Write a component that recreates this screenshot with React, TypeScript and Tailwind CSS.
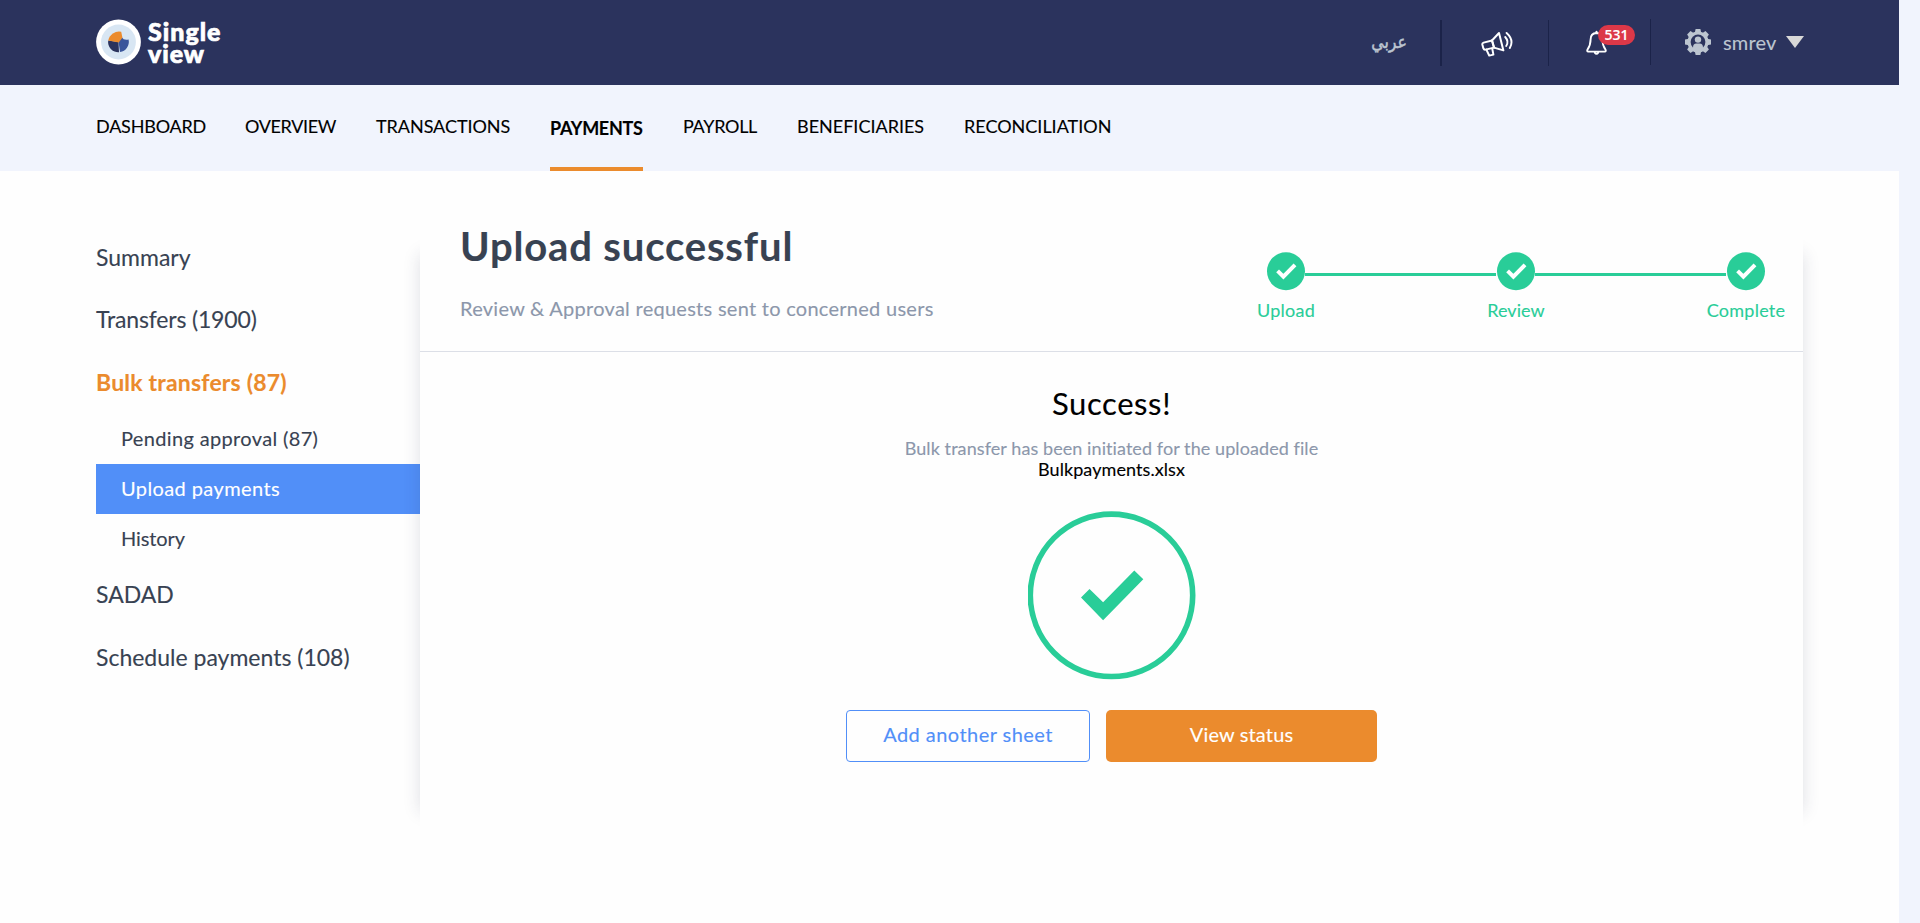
import React from "react";

type NavItem = { label: string; box: string; active?: boolean };

const NAV: NavItem[] = [
  { label: "DASHBOARD", box: "w-[109px] tracking-[-0.2px]" },
  { label: "OVERVIEW", box: "w-[91px] tracking-[-0.35px]" },
  { label: "TRANSACTIONS", box: "w-[134px] tracking-[-0.05px]" },
  { label: "PAYMENTS", box: "w-[93px] tracking-[-0.3px]", active: true },
  { label: "PAYROLL", box: "w-[74px] tracking-[-0.3px]" },
  { label: "BENEFICIARIES", box: "w-[127px] tracking-[0px]" },
  { label: "RECONCILIATION", box: "w-[148px] tracking-[0px]" },
];

function Logo() {
  return (
    <div className="flex items-center">
      <svg width="46" height="46" viewBox="0 0 46 46" className="block">
        <circle cx="23.5" cy="23" r="22.4" fill="#fff" />
        <circle cx="23.5" cy="23" r="17.4" fill="#d8e6f3" />
        <path d="M23.5 23 L13.2 21.5 A10.2 10.2 0 0 0 24 33.2 Z" fill="#2b335d" />
        <path d="M23.5 22.6 L25 33 A10.4 10.4 0 0 0 33.6 20.6 Q28.5 21.6 27 18.6 Z" fill="#3a559b" />
        <path d="M23.8 23.4 L13.2 21.4 A11 11 0 0 1 26.2 12.8 L27.4 18.6 Z" fill="#eb8b2d" />
      </svg>
      <div className="ml-[7px] text-[25px] leading-[22px] font-black text-white [-webkit-text-stroke:0.7px_white] [paint-order:stroke] [stroke-linejoin:round]">
        <span className="tracking-[1px]">Single</span>
        <br />
        <span className="tracking-[0.9px]">view</span>
      </div>
    </div>
  );
}

function Megaphone() {
  return (
    <svg width="32" height="26" viewBox="0 0 32 26" fill="none" stroke="#fff" strokeWidth="2" strokeLinejoin="round" strokeLinecap="round">
      <path d="M11 9.5 L2.6 11.6 Q1 12.2 1.4 13.8 L2.4 17.4 Q3 19 4.6 18.6 L13 16.6" />
      <path d="M11 9.5 L18 2 L22.4 19.4 L13 16.6 Z" />
      <path d="M11 9.5 L13 16.6" />
      <path d="M5.4 18.6 L8.2 24.6 L12.4 23.6 L11.2 17.4" />
      <path d="M24.2 6 Q28.2 10.5 25.2 15" strokeWidth="1.9" />
      <path d="M25.6 2 Q33.4 9 28.8 17" strokeWidth="1.9" />
    </svg>
  );
}

function Bell() {
  return (
    <svg width="21" height="26" viewBox="0 0 21 26" fill="none" stroke="#fff" strokeWidth="1.9" strokeLinejoin="round" strokeLinecap="round">
      <path d="M10.5 4 C6.4 4.2 4.6 7 4.6 10.4 C4.6 15.6 3 18.4 1.4 20.8 Q0.8 22.4 2.2 22.6 H18.8 Q20.2 22.4 19.6 20.8 C18 18.4 16.4 15.6 16.4 10.4 C16.4 7 14.6 4.2 10.5 4 Z" />
      <path d="M10.5 2.6 V4" />
      <path d="M8.8 23.6 Q10.5 26 12.2 23.6" />
    </svg>
  );
}

function Gear() {
  const teeth = [0, 45, 90, 135, 180, 225, 270, 315];
  return (
    <svg width="26" height="28" viewBox="-13 -14 26 28" fill="#bcc5d0">
      {teeth.map((a) => (
        <path key={a} d="M-3.2 -9 L-2.4 -13 H2.4 L3.2 -9 Z" transform={`rotate(${a})`} />
      ))}
      <circle r="10.6" />
      <circle r="7.4" fill="#2b335d" />
      <circle cy="-2.4" r="3.2" />
      <path d="M-5 9 V5.4 Q-5 1.6 -1.6 1.6 H1.6 Q5 1.6 5 5.4 V9 Z" />
    </svg>
  );
}

function Step({ label, className }: { label: string; className: string }) {
  return (
    <div className="flex w-[38px] flex-col items-center">
      <svg width="38" height="39" viewBox="0 0 38 39" className="block">
        <circle cx="19" cy="19.3" r="19" fill="#29cd98" />
        <path d="M10.6 18.8 L16.4 24.6 L28 12.8" fill="none" stroke="#fff" strokeWidth="4" />
      </svg>
      <div className={`mt-[7px] text-[18px] leading-[24px] whitespace-nowrap text-[#29cd98] ${className}`}>{label}</div>
    </div>
  );
}

export default function App() {
  return (
    <div className="flex h-[923px] w-[1920px] overflow-hidden bg-[#f1f4fd] font-['Lato','Liberation_Sans',sans-serif] [-webkit-text-stroke:0.12px]">
      <div className="flex w-[1899px] flex-col">
        <header className="flex h-[85px] items-start justify-between bg-[#2b335d] pr-[95px] pl-[95px]">
          <div className="pt-[19px]">
            <Logo />
          </div>
          <div className="flex items-start">
            <div
              dir="rtl"
              className="mt-[26px] mr-[33px] w-[36px] origin-right scale-x-[0.88] text-[18px] leading-[32px] whitespace-nowrap text-[#bcc5d0] font-['DejaVu_Sans',sans-serif] [-webkit-text-stroke:0.5px]"
            >
              عربي
            </div>
            <div className="mt-[20px] h-[46px] w-[2px] bg-[#1b2349]" />
            <div className="mt-[31px] ml-[39px]">
              <Megaphone />
            </div>
            <div className="mt-[20px] ml-[35px] h-[46px] w-px bg-[#1b2349]" />
            <div className="relative mt-[29px] ml-[37px]">
              <Bell />
              <div className="absolute top-[-4px] left-[12px] flex h-[20px] w-[37px] items-center justify-center rounded-full bg-[#dc3848] text-[14px] leading-none font-semibold text-white font-['Open_Sans',sans-serif]">
                531
              </div>
            </div>
            <div className="mt-[19px] ml-[43px] h-[46px] w-px bg-[#1b2349]" />
            <div className="mt-[28px] ml-[34px]">
              <Gear />
            </div>
            <div className="mt-[29px] ml-[12px] w-[54px] text-[20px] leading-[26px] tracking-[0.2px] text-[#bcc5d0]">smrev</div>
            <svg width="18" height="12" viewBox="0 0 18 12" className="mt-[36px] ml-[9px] block">
              <path d="M0 0 H18 L9 12 Z" fill="#d8d8d8" />
            </svg>
          </div>
        </header>

        <nav className="flex h-[86px] shrink-0 gap-[40px] bg-[#f1f4fd] pl-[96px] text-[18px] leading-[24px] whitespace-nowrap text-black">
          {NAV.map((n) => (
            <div
              key={n.label}
              className={`h-[86px] ${n.box} ${n.active ? "border-b-4 border-[#eb8b2d] pt-[31px] font-bold" : "pt-[29px]"}`}
            >
              {n.label}
            </div>
          ))}
        </nav>

        <div className="flex flex-1 bg-[#fefefe] pl-[96px]">
          <aside className="flex w-[324px] flex-col pt-[55px] text-[23px] whitespace-nowrap text-[#384252]">
            <div className="flex h-[62px] items-center">Summary</div>
            <div className="flex h-[63px] items-center tracking-[-0.15px]">Transfers (1900)</div>
            <div className="flex h-[63px] items-center font-bold tracking-[0.2px] text-[#eb8b2d]">Bulk transfers (87)</div>
            <div className="flex h-[50px] items-center pb-[2px] pl-[25px] text-[20px] tracking-[0.35px]">Pending approval (87)</div>
            <div className="flex h-[50px] items-center bg-[#518ff8] pb-[2px] pl-[25px] text-[20px] tracking-[0.4px] text-white">Upload payments</div>
            <div className="flex h-[50px] items-center pb-[2px] pl-[25px] text-[20px] tracking-[-0.1px]">History</div>
            <div className="flex h-[61px] items-center">SADAD</div>
            <div className="flex h-[65px] items-center">Schedule payments (108)</div>
          </aside>

          <div className="relative isolate h-[657px] w-[1383px]">
            <div className="absolute inset-x-0 top-[83px] bottom-[16px] -z-10 shadow-[0_0_16px_rgba(40,44,80,0.15)]" />
            <main className="flex h-[657px] flex-col bg-[#fefefe]">
              <div className="flex h-[181px] shrink-0 justify-between border-b border-[#dcdfe7] pr-[38px] pl-[40px]">
                <div className="whitespace-nowrap">
                  <h1 className="mt-[51px] text-[40px] leading-[48px] font-bold tracking-[0.85px] text-[#384252]">Upload successful</h1>
                  <p className="mt-[25px] text-[20px] leading-[26px] tracking-[0.27px] text-[#8c97ab]">
                    Review &amp; Approval requests sent to concerned users
                  </p>
                </div>
                <div className="flex items-start pt-[81px]">
                  <Step label="Upload" className="tracking-[0.25px]" />
                  <div className="mt-[21px] mr-px h-[3px] w-[191px] bg-[#29cd98]" />
                  <Step label="Review" className="tracking-[0.05px]" />
                  <div className="mt-[21px] mr-px h-[3px] w-[191px] bg-[#29cd98]" />
                  <Step label="Complete" className="tracking-[0.25px]" />
                </div>
              </div>
              <div className="flex flex-col items-center">
                <h2 className="mt-[32px] text-[31px] leading-[38px] tracking-[0.6px] text-black">Success!</h2>
                <p className="mt-[15px] text-[18px] leading-[22px] tracking-[0.08px] text-[#8c97ab]">
                  Bulk transfer has been initiated for the uploaded file
                </p>
                <p className="text-[18px] leading-[20px] tracking-[0.08px] text-black">Bulkpayments.xlsx</p>
                <svg width="168" height="169" viewBox="0 0 168 169" className="mt-[32px] block">
                  <circle cx="83.5" cy="84.3" r="81.2" fill="none" stroke="#29cd98" strokeWidth="5.6" />
                  <path d="M53 86.5 L61.5 77.9 L75.1 91.3 L106.3 59.4 L115.3 68.3 L75.1 109.3 Z" fill="#29cd98" />
                </svg>
                <div className="mt-[30px] flex gap-[16px] text-[20px]">
                  <button className="flex h-[52px] w-[244px] items-center justify-center rounded-[4px] border border-[#518ff8] pb-[4px] tracking-[0.45px] text-[#518ff8]">
                    Add another sheet
                  </button>
                  <button className="flex h-[52px] w-[271px] items-center justify-center rounded-[5px] bg-[#eb8b2d] pb-[4px] tracking-[0.15px] text-white">
                    View status
                  </button>
                </div>
              </div>
            </main>
          </div>
        </div>
      </div>
    </div>
  );
}
